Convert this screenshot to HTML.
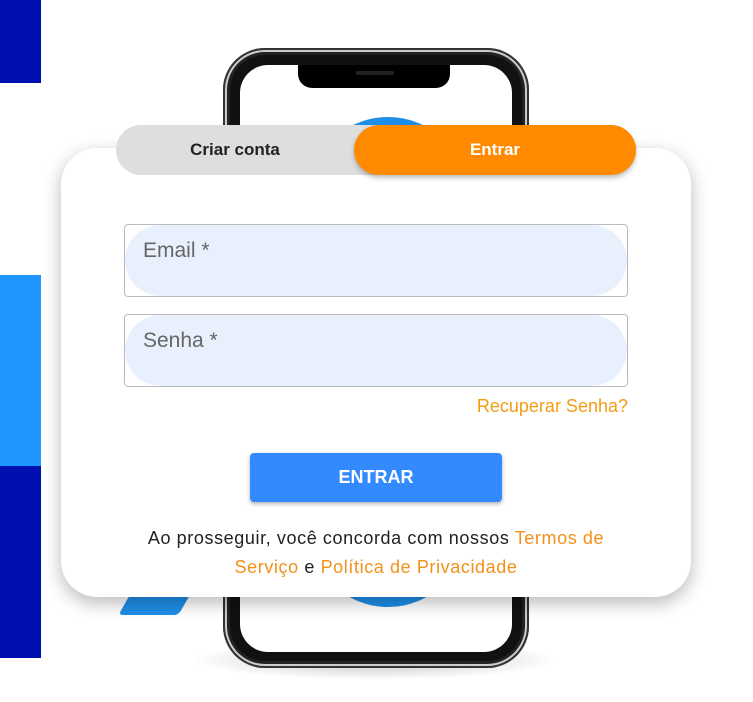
<!DOCTYPE html>
<html><head><style>
body{margin:0;width:753px;height:702px;background:#fff;position:relative;overflow:hidden;font-family:"Liberation Sans",sans-serif}
.a{position:absolute}
</style></head><body>
<div class="a" style="left:0;top:0;width:41px;height:83px;background:#0010b0"></div>
<div class="a" style="left:0;top:275px;width:41px;height:191px;background:#1e96ff"></div>
<div class="a" style="left:0;top:466px;width:41px;height:192px;background:#0010b0"></div>
<div class="a" style="left:190px;top:640px;width:370px;height:40px;border-radius:50%;background:radial-gradient(ellipse,rgba(0,0,0,.25),rgba(0,0,0,0) 70%)"></div>
<div class="a" style="left:223px;top:48px;width:306px;height:620px;border-radius:42px;background:#111;box-shadow:inset 0 0 0 2px #333,inset 0 0 0 4px #ccc,inset 0 0 0 7px #222"></div>
<div class="a" style="left:240px;top:65px;width:272px;height:587px;border-radius:28px;background:#fff;overflow:hidden">
 <div class="a" style="left:68px;top:52px;width:160px;height:490px;border-radius:80px;background:#1e8ee8"></div>
</div>
<div class="a" style="left:127px;top:585px;width:60px;height:30px;background:#1e8ee8;transform:skewX(-30deg);border-radius:4px"></div>
<div class="a" style="left:298px;top:65px;width:152px;height:23px;border-radius:0 0 14px 14px;background:#000"></div>
<div class="a" style="left:356px;top:71px;width:38px;height:4px;border-radius:2px;background:#222"></div>
<div class="a" style="left:61px;top:148px;width:630px;height:449px;border-radius:36px;background:#fff;box-shadow:0 6px 18px rgba(0,0,0,.28)"></div>
<div class="a" style="left:116px;top:125px;width:520px;height:50px;border-radius:25px;background:#dedede"></div>
<div class="a" style="left:116px;top:125px;width:238px;height:50px;line-height:50px;text-align:center;font-weight:bold;font-size:17px;color:#222">Criar conta</div>
<div class="a" style="left:354px;top:125px;width:282px;height:50px;line-height:50px;border-radius:25px;background:#ff8a00;text-align:center;font-weight:bold;font-size:17px;color:#fff;box-shadow:0 3px 5px rgba(0,0,0,.25)">Entrar</div>
<div class="a" style="left:124px;top:224px;width:502px;height:71px;border:1px solid #bbb;border-radius:4px;overflow:hidden"><div style="height:100%;background:#e8f0fe;border-radius:36px;padding:14px 0 0 18px;box-sizing:border-box;font-size:21px;color:#666">Email *</div></div>
<div class="a" style="left:124px;top:314px;width:502px;height:71px;border:1px solid #bbb;border-radius:4px;overflow:hidden"><div style="height:100%;background:#e8f0fe;border-radius:36px;padding:14px 0 0 18px;box-sizing:border-box;font-size:21px;color:#666">Senha *</div></div>
<div class="a" style="right:125px;top:396px;font-size:18px;color:#f39c12">Recuperar Senha?</div>
<div class="a" style="left:250px;top:453px;width:252px;height:49px;line-height:49px;border-radius:4px;background:#338aff;color:#fff;text-align:center;font-weight:bold;font-size:18px;box-shadow:0 2px 4px rgba(0,0,0,.3)">ENTRAR</div>
<div class="a" style="left:60px;top:524px;width:632px;text-align:center;font-size:18px;letter-spacing:0.6px;line-height:29px;color:#222;white-space:nowrap">Ao prosseguir, você concorda com nossos <span style="color:#f39018">Termos de</span><br><span style="color:#f39018">Serviço</span> e <span style="color:#f39018">Política de Privacidade</span></div>
</body></html>
